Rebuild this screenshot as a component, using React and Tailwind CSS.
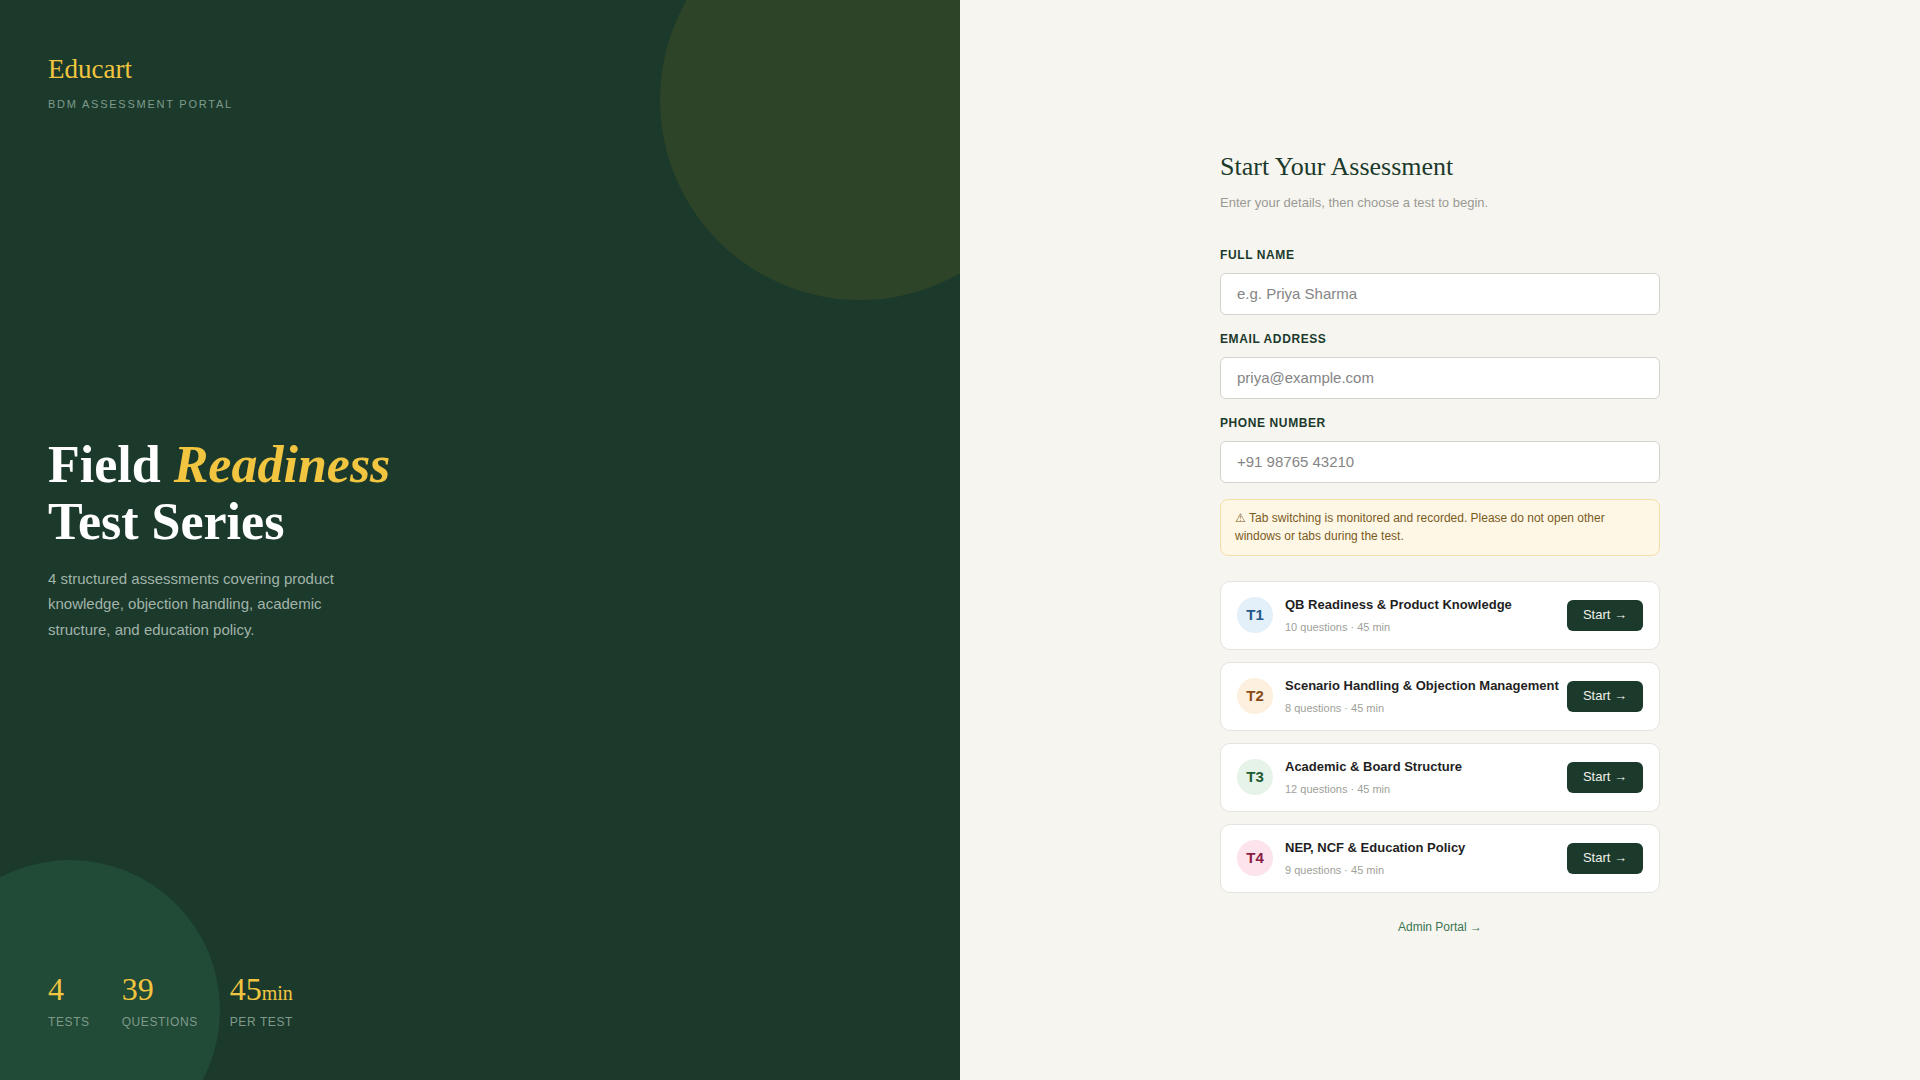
import { useState } from "react"

const tests = [
  { id: "T1", title: "QB Readiness & Product Knowledge", meta: "10 questions · 45 min", badge: "bg-[#e3eff9] text-[#245a88]" },
  { id: "T2", title: "Scenario Handling & Objection Management", meta: "8 questions · 45 min", badge: "bg-[#fdf0de] text-[#8a4b18]" },
  { id: "T3", title: "Academic & Board Structure", meta: "12 questions · 45 min", badge: "bg-[#e5f3e8] text-[#1f5a33]" },
  { id: "T4", title: "NEP, NCF & Education Policy", meta: "9 questions · 45 min", badge: "bg-[#fce3ec] text-[#8a1d45]" },
]

const fields = [
  { label: "Full Name", type: "text", placeholder: "e.g. Priya Sharma", key: "name" },
  { label: "Email Address", type: "email", placeholder: "priya@example.com", key: "email" },
  { label: "Phone Number", type: "tel", placeholder: "+91 98765 43210", key: "phone" },
]

const stats = [
  { value: "4", label: "Tests" },
  { value: "39", label: "Questions" },
  { value: "45", unit: "min", label: "Per Test" },
]

const App = () => {
  const [form, setForm] = useState({ name: "", email: "", phone: "" })

  return (
    <div className="flex h-screen w-full font-['Liberation_Sans',Arial,sans-serif]">
      {/* left: brand panel */}
      <div className="relative flex h-screen w-1/2 flex-col overflow-hidden bg-[#1b3a2c] px-12 pt-12 pb-[50px]">
        <div className="absolute top-[-100px] right-[-100px] h-[400px] w-[400px] rounded-full bg-[#2d4429]" />
        <div className="absolute bottom-[-80px] left-[-80px] h-[300px] w-[300px] rounded-full bg-[#214a37]" />

        <div className="relative">
          <div className="font-['Liberation_Serif',serif] text-[27px] leading-[42px] text-[#f2c540]">Educart</div>
          <div className="mt-[6px] text-[11px] leading-4 tracking-[0.16em] text-[#7f9a8b] uppercase">
            BDM Assessment Portal
          </div>
        </div>

        <div className="relative flex flex-1 items-center pb-[7px]">
          <div>
            <h1 className="font-['Liberation_Serif',serif] text-[52px] leading-[57px] font-bold text-white">
              Field <em className="text-[#f2c540]">Readiness</em>
              <br />
              Test Series
            </h1>
            <p className="mt-4 max-w-[320px] text-[15px] leading-[25.5px] text-[#a2b3a9]">
              4 structured assessments covering product knowledge, objection handling, academic structure, and
              education policy.
            </p>
          </div>
        </div>

        <div className="relative flex gap-8">
          {stats.map((s) => (
            <div key={s.label}>
              <div className="font-['Liberation_Serif',serif] text-[32px] leading-none text-[#f2c540]">
                {s.value}
                {s.unit && <span className="text-[20px]">{s.unit}</span>}
              </div>
              <div className="mt-[9px] text-xs leading-4 tracking-wider text-[#7f9a8b] uppercase">{s.label}</div>
            </div>
          ))}
        </div>
      </div>

      {/* right: form panel */}
      <div className="flex h-screen w-1/2 items-center justify-center bg-[#f6f5f0]">
        <div className="w-[440px] pt-[5px]">
          <h2 className="font-['Liberation_Serif',serif] text-[26px] leading-8 text-[#1b3a2c]">Start Your Assessment</h2>
          <p className="mt-[10px] text-[13px] leading-5 text-[#9a9a94]">Enter your details, then choose a test to begin.</p>

          <div className="mt-[34px] flex flex-col gap-4">
            {fields.map((f) => (
              <div key={f.key}>
                <label className="mb-2.5 block text-xs leading-4 font-bold tracking-wider text-[#1b3a2c] uppercase">
                  {f.label}
                </label>
                <input
                  type={f.type}
                  placeholder={f.placeholder}
                  value={form[f.key]}
                  onChange={(e) => setForm((prev) => ({ ...prev, [f.key]: e.target.value }))}
                  className="h-[42px] w-full rounded-md border border-[#d3d3ce] bg-white px-4 text-[15px] text-[#222] outline-none placeholder:text-[#858585]"
                />
              </div>
            ))}
          </div>

          <div className="mt-4 rounded-lg border border-[#f5dfa9] bg-[#fef7e5] px-3.5 py-[9.5px] text-xs leading-[18px] text-[#7a5b1f]">
            ⚠ Tab switching is monitored and recorded. Please do not open other windows or tabs during the test.
          </div>

          <div className="mt-[25px] flex flex-col gap-3">
            {tests.map((t) => (
              <div key={t.id} className="flex h-[69px] items-center gap-3 rounded-[10px] border border-[#e4e4df] bg-white px-4">
                <div className={`flex h-9 w-9 shrink-0 items-center justify-center rounded-full text-[15px] font-bold ${t.badge}`}>
                  {t.id}
                </div>
                <div className="min-w-0 flex-1">
                  <div className="text-[13px] leading-[18px] font-bold whitespace-nowrap text-[#1f1f1f]">{t.title}</div>
                  <div className="mt-[5px] text-[11px] leading-4 text-[#a09f99]">{t.meta}</div>
                </div>
                <button className="h-[31px] shrink-0 rounded-md bg-[#1b3a2c] px-4 text-[13px] text-[#f0f0ea]">Start →</button>
              </div>
            ))}
          </div>

          <div className="mt-[26px] text-center text-xs leading-4 text-[#3b7553]">Admin Portal →</div>
        </div>
      </div>
    </div>
  )
}

export default App
